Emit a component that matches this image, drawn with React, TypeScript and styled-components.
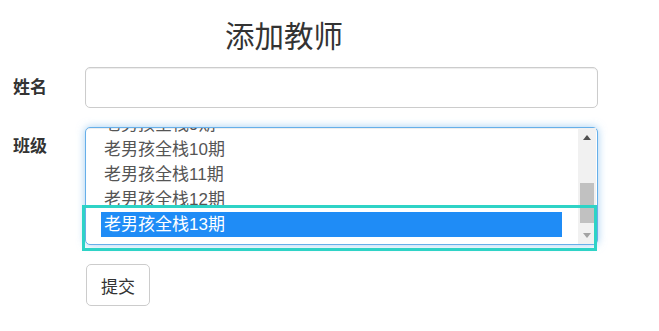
import React from "react";
import styled, { createGlobalStyle } from "styled-components";

const GlobalStyle = createGlobalStyle`
  html, body { margin: 0; padding: 0; background: #fff; }
  body {
    font-family: "Liberation Sans", "Noto Sans CJK SC", sans-serif;
    color: #333;
  }
`;

const Page = styled.div`
  width: 659px;
  padding: 0 60px 0 12px;
  box-sizing: border-box;
`;

const Title = styled.h3`
  margin: 0;
  padding: 21px 0 0 213px;
  font-size: 29.5px;
  font-weight: 400;
  line-height: 1.1;
  color: #333;
`;

const Form = styled.form`
  margin-top: 14px;
  display: flex;
  flex-direction: column;
  gap: 19px;
`;

const Group = styled.div<{ $align?: string }>`
  display: flex;
  align-items: ${(p) => p.$align || "center"};
`;

const Label = styled.label<{ $pt?: number }>`
  width: 73px;
  flex: none;
  font-size: 17px;
  font-weight: bold;
  line-height: 24px;
  padding-top: ${(p) => p.$pt || 0}px;
  color: #333;
  padding-left: 1px;
  box-sizing: border-box;
`;

const Input = styled.input`
  width: 513px;
  height: 41px;
  box-sizing: border-box;
  border: 1px solid #ccc;
  border-radius: 5px;
  box-shadow: inset 0 1px 1px rgba(0, 0, 0, 0.075);
  font-size: 17px;
  padding: 7px 15px;
  outline: none;
`;

const SelectBox = styled.div`
  position: relative;
  width: 513px;
  height: 118px;
  box-sizing: border-box;
  border: 1px solid #66afe9;
  border-radius: 5px;
  box-shadow: inset 0 1px 1px rgba(0, 0, 0, 0.075), 0 0 8px rgba(102, 175, 233, 0.6);
  display: flex;
  background: #fff;
`;

const Viewport = styled.div`
  flex: 1;
  overflow: hidden;
`;

const OptionList = styled.ul`
  list-style: none;
  margin: -23px 0 0 0;
  padding: 7px 16px 7px 15px;
`;

const Option = styled.li<{ $selected?: boolean }>`
  height: 25px;
  line-height: 25px;
  font-size: 17px;
  white-space: nowrap;
  padding-left: 3px;
  color: ${(p) => (p.$selected ? "#fff" : "#555")};
  background: ${(p) => (p.$selected ? "#1f8cf6" : "transparent")};
`;

const Scrollbar = styled.div`
  width: 18px;
  flex: none;
  background: #f1f1f1;
  display: flex;
  flex-direction: column;
  margin-right: 1px;
`;

const ArrowButton = styled.div<{ $dir: "up" | "down"; $color: string }>`
  height: 18px;
  flex: none;
  display: flex;
  align-items: center;
  justify-content: center;
  &::before {
    content: "";
    width: 0;
    height: 0;
    border-left: 4.5px solid transparent;
    border-right: 4.5px solid transparent;
    ${(p) =>
      p.$dir === "up"
        ? `border-bottom: 5px solid ${p.$color};`
        : `border-top: 5px solid ${p.$color};`}
  }
`;

const Track = styled.div`
  flex: 1;
  display: flex;
  flex-direction: column;
  padding: 37px 2px 0;
`;

const Thumb = styled.div`
  height: 40px;
  background: #c1c1c1;
`;

const Annotation = styled.div`
  position: absolute;
  left: -4px;
  top: 77px;
  width: 515px;
  height: 46px;
  box-sizing: border-box;
  border: 3px solid #2ed3c6;
  pointer-events: none;
`;

const ButtonRow = styled.div`
  padding-left: 74px;
`;

const Button = styled.button`
  height: 42px;
  padding: 0 14px;
  border: 1px solid #ccc;
  border-radius: 5px;
  background: #fff;
  color: #333;
  font-size: 17px;
  font-family: inherit;
`;

const classes = [9, 10, 11, 12, 13].map((n) => `老男孩全栈${n}期`);

export default function App() {
  return (
    <>
      <GlobalStyle />
      <Page>
        <Title>添加教师</Title>
        <Form>
          <Group>
            <Label>姓名</Label>
            <Input type="text" />
          </Group>
          <Group $align="flex-start">
            <Label $pt={8}>班级</Label>
            <SelectBox>
              <Viewport>
                <OptionList>
                  {classes.map((c, i) => (
                    <Option key={c} $selected={i === classes.length - 1}>
                      {c}
                    </Option>
                  ))}
                </OptionList>
              </Viewport>
              <Scrollbar>
                <ArrowButton $dir="up" $color="#505050" />
                <Track>
                  <Thumb />
                </Track>
                <ArrowButton $dir="down" $color="#a3a3a3" />
              </Scrollbar>
              <Annotation />
            </SelectBox>
          </Group>
          <ButtonRow>
            <Button type="button">提交</Button>
          </ButtonRow>
        </Form>
      </Page>
    </>
  );
}
